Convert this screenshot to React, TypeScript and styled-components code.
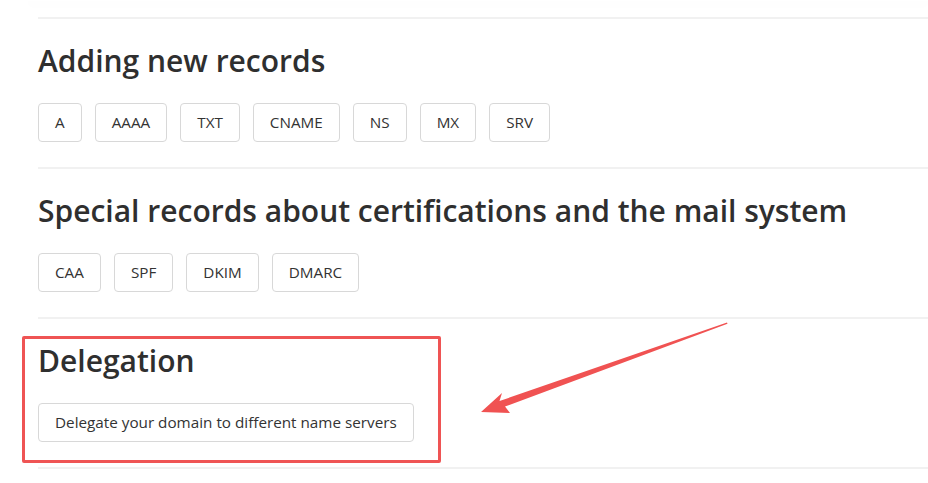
import React from 'react';
import styled, { createGlobalStyle } from 'styled-components';

const GlobalStyle = createGlobalStyle`
  html, body {
    margin: 0;
    padding: 0;
    background: #fff;
  }
  body {
    font-family: "Open Sans", "Noto Sans", sans-serif;
    color: #333;
  }
`

const Page = styled.div`
  position: relative;
  width: 928px;
  height: 483px;
  overflow: hidden;
  padding-left: 38px;
  box-sizing: border-box;
`

const CardEdge = styled.div`
  height: 1px;
  margin-left: -10px;
  box-shadow: 0 2px 10px rgba(0, 0, 0, 0.09);
  margin-bottom: 16px;
`

const Section = styled.section`
  border-top: 2px solid #f1f1f1;
  padding: 24px 0 25px 0;
  &:last-of-type {
    border-bottom: 2px solid #f1f1f1;
  }
`

const Heading = styled.h2`
  margin: 0 0 24px 0;
  font-size: 30px;
  line-height: 36px;
  font-weight: 600;
  color: #2f2f2f;
  white-space: nowrap;
`

const ButtonRow = styled.div`
  display: flex;
  gap: 13px;
`

const RecordButton = styled.button`
  font-family: "Open Sans", "Noto Sans", sans-serif;
  font-size: 15.25px;
  line-height: 23px;
  color: #333;
  background: #fff;
  border: 1px solid #d8d8d8;
  border-radius: 4px;
  padding: 7px 16px;
  cursor: pointer;
  &:hover {
    background: #f7f7f7;
  }
`

const Highlight = styled.div`
  position: absolute;
  left: 22px;
  top: 336px;
  width: 419px;
  height: 127px;
  border: 3px solid #ef5454;
  border-radius: 2px;
  box-sizing: border-box;
  pointer-events: none;
`

const ArrowLayer = styled.svg`
  position: absolute;
  left: 0;
  top: 0;
  pointer-events: none;
`

const sections = [
  { title: 'Adding new records', items: ['A', 'AAAA', 'TXT', 'CNAME', 'NS', 'MX', 'SRV'] },
  { title: 'Special records about certifications and the mail system', items: ['CAA', 'SPF', 'DKIM', 'DMARC'] },
  { title: 'Delegation', items: ['Delegate your domain to different name servers'] },
]

export default function App() {
  return (
    <>
      <GlobalStyle />
      <Page>
        <CardEdge />
        {sections.map((s) => (
          <Section key={s.title}>
            <Heading>{s.title}</Heading>
            <ButtonRow>
              {s.items.map((item) => (
                <RecordButton key={item}>{item}</RecordButton>
              ))}
            </ButtonRow>
          </Section>
        ))}
        <Highlight />
        <ArrowLayer width="928" height="483" viewBox="0 0 928 483">
          <polygon
            points="481,412 502,393 499.5,401 727,322.5 727.5,323.8 505,406.5 510,413"
            fill="#f05252"
          />
        </ArrowLayer>
      </Page>
    </>
  )
}
